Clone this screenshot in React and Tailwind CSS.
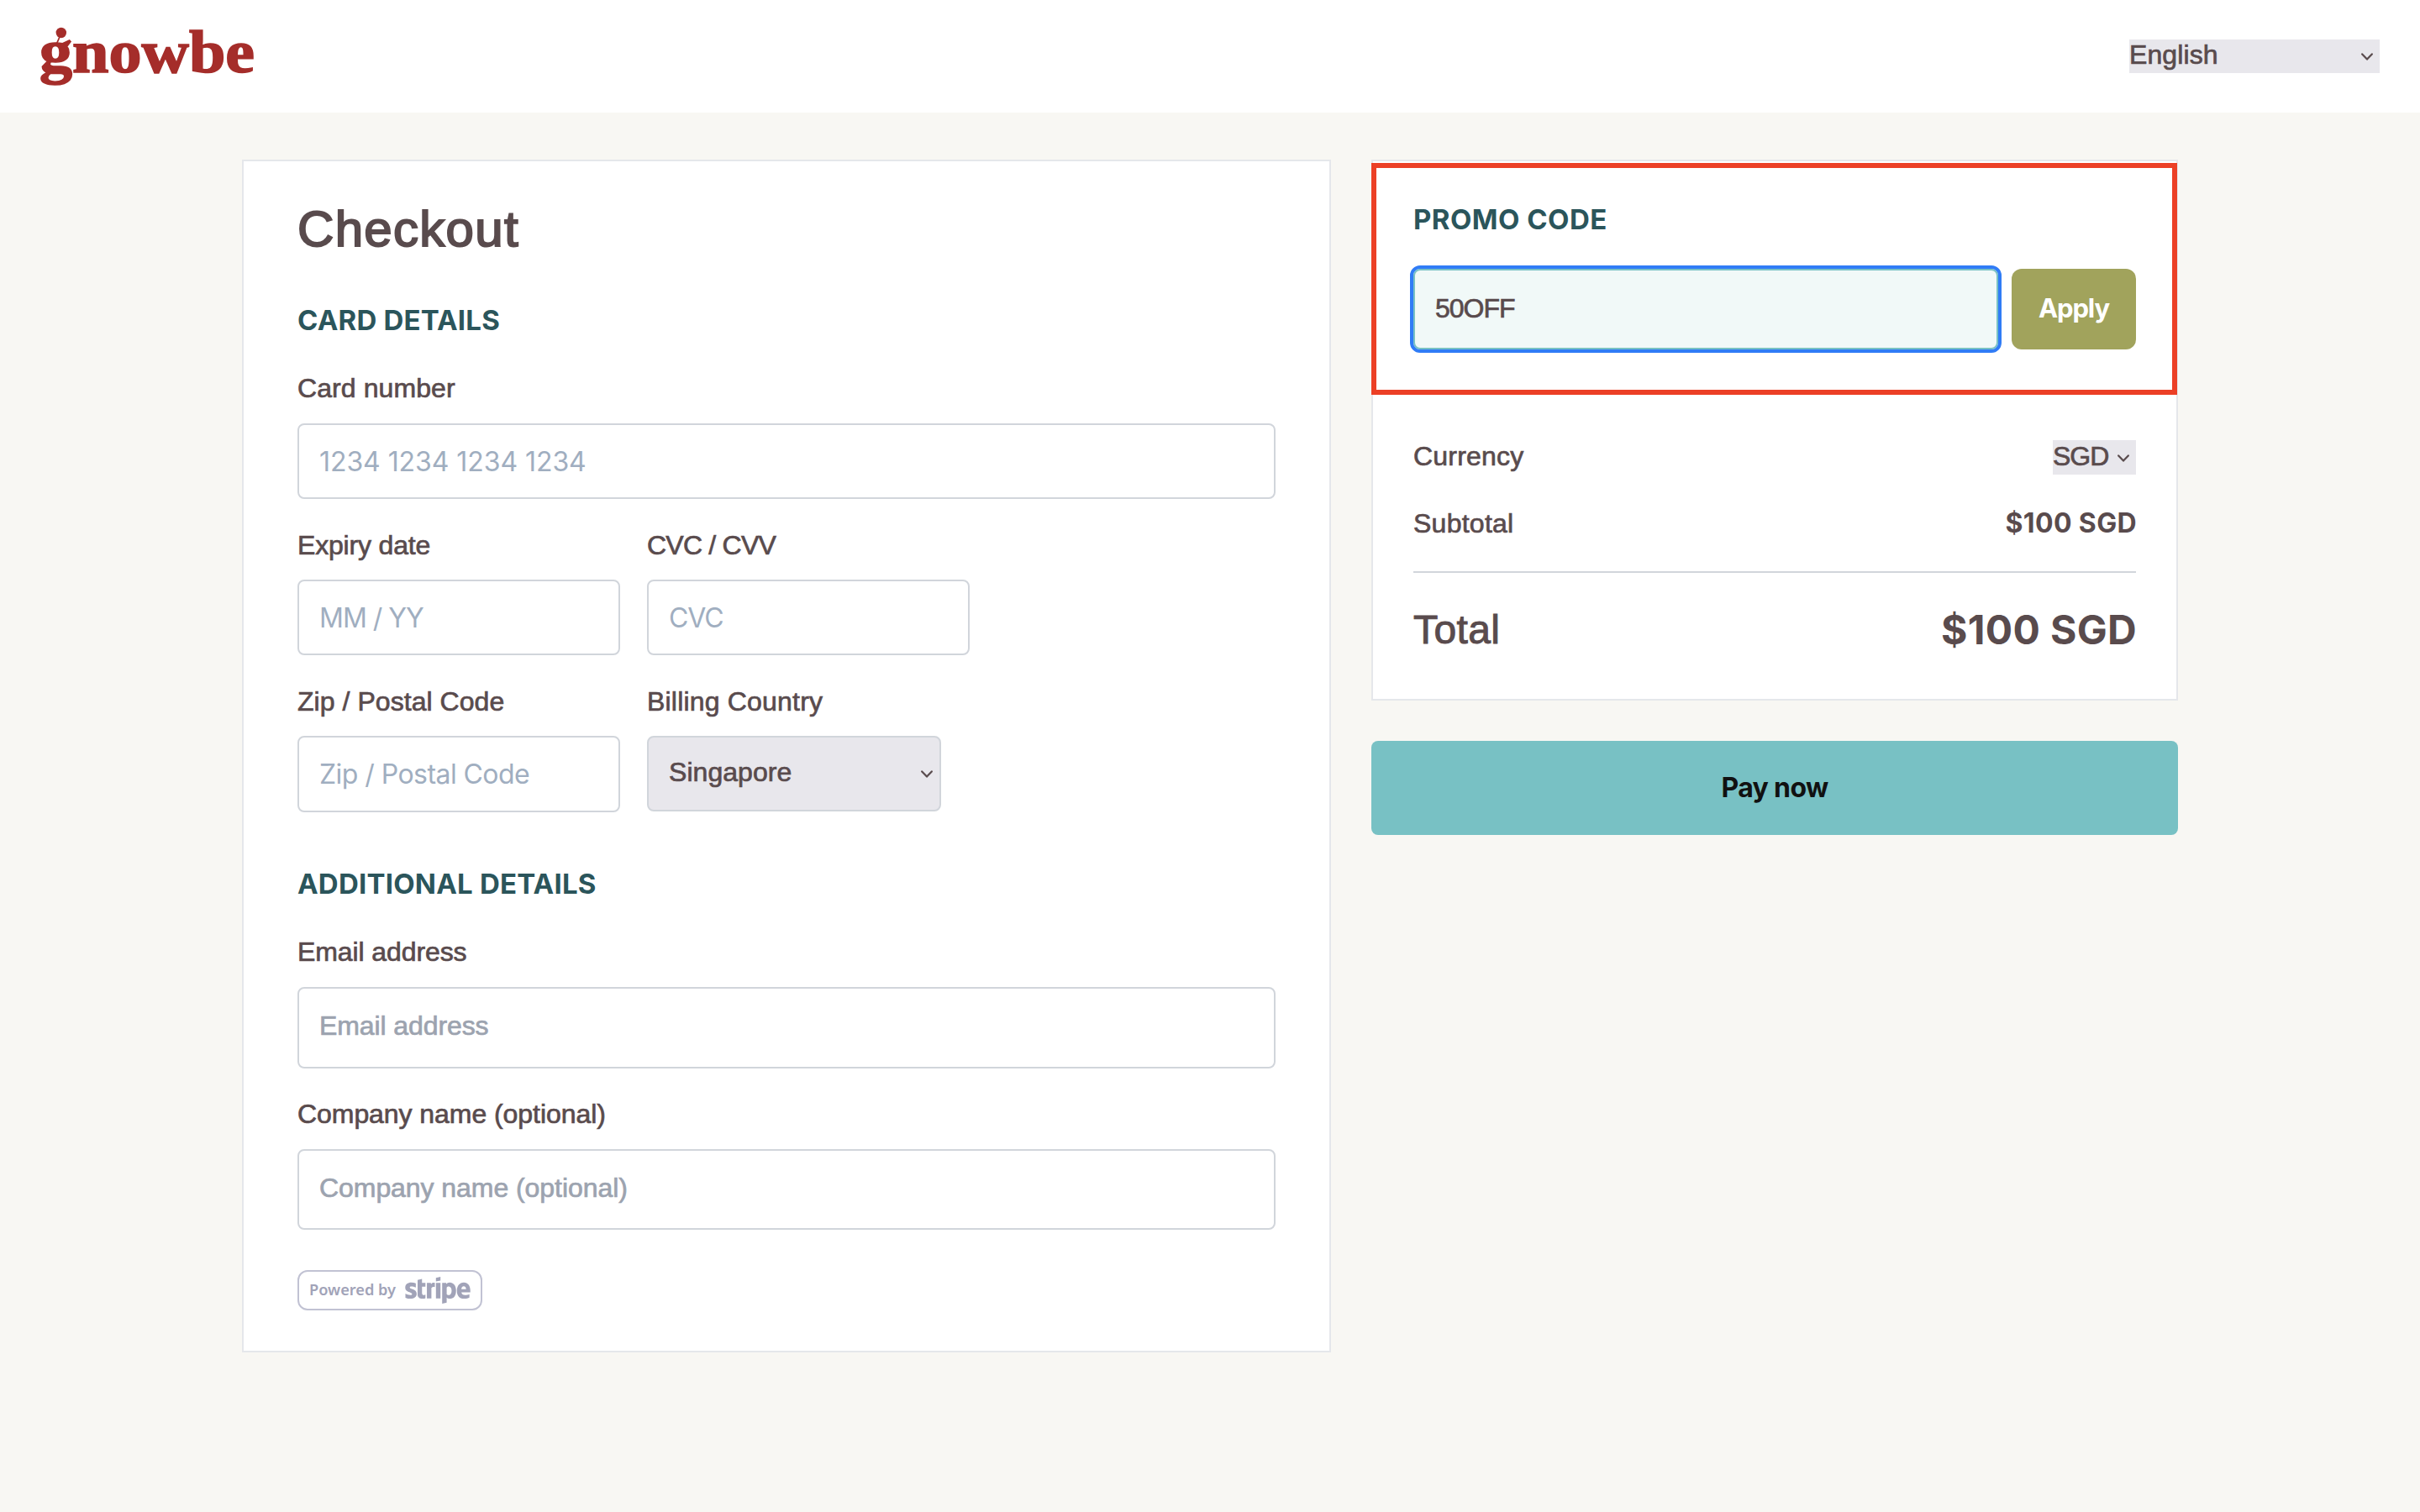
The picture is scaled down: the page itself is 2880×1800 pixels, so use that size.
import React from "react";
import { FaStripe } from "react-icons/fa";

const body = "text-[32px] leading-[48px] [-webkit-text-stroke:0.7px_#594b4d]";
const heading =
  "font-['Inter',sans-serif] text-[33px] leading-[46px] pb-0.5 font-bold text-[#2b555b] uppercase";
const field = "rounded-lg border-2 border-[#d1d5db] bg-white pl-6 pt-5";
const stripePlaceholder = "block font-['Inter',sans-serif] text-[32px] leading-[48px] text-[#a0aec0]";
const plainPlaceholder =
  "block text-[32px] leading-[48px] text-[#9ca3af] [-webkit-text-stroke:0.7px_#9ca3af]";

function Chevron({ className = "" }) {
  return (
    <svg
      viewBox="0 0 14 9"
      className={`h-[9px] w-[14px] shrink-0 ${className}`}
      fill="none"
      stroke="#594b4d"
      strokeWidth="2.2"
      strokeLinecap="round"
      strokeLinejoin="round"
    >
      <path d="M1.2 1.4 7 7.6 12.8 1.4" />
    </svg>
  );
}

function Logo() {
  return (
    <div className="relative h-[134px] w-[260px] text-[#a52d2a]">
      <span className="-ml-px block origin-left scale-x-[1.1] font-['Liberation_Serif',serif] text-[71px] leading-[125px] font-bold [-webkit-text-stroke:1.6px_#a52d2a]">
        gnowbe
      </span>
      <svg viewBox="0 0 30 24" className="absolute left-[14px] top-[31px] h-6 w-[30px]">
        <circle cx="10.8" cy="8" r="6.2" fill="currentColor" />
        <path d="M9.8 11 5 22" stroke="currentColor" strokeWidth="1.8" />
      </svg>
    </div>
  );
}

function Header() {
  return (
    <header className="flex h-[134px] items-start justify-between bg-white pl-12 pr-12">
      <Logo />
      <div className="mt-[47px] flex h-10 w-[298px] justify-between bg-[#e8e7ec] pr-2">
        <span className="text-[32px] leading-9 tracking-[0.1px] [-webkit-text-stroke:0.7px_#594b4d]">English</span>
        <Chevron className="mt-4" />
      </div>
    </header>
  );
}

function CheckoutForm() {
  return (
    <section className="h-[1420px] w-[1296px] border-2 border-[#e5e7eb] bg-white px-16 pt-[45px]">
      <h1 className="text-[60px] leading-[72px] tracking-[1.3px] [-webkit-text-stroke:2px_#594b4d]">Checkout</h1>

      <h2 className={`mt-[49px] tracking-[0.2px] ${heading}`}>Card details</h2>
      <div className={`mt-8 tracking-[0.08px] ${body}`}>Card number</div>
      <div className={`mt-[18px] h-[90px] ${field}`}>
        <span className={stripePlaceholder}>
          <span className="tracking-[-0.06px]">1234 1234 1234 1234</span>
        </span>
      </div>

      <div className="mt-[31px] flex gap-8">
        <div className="w-96">
          <div className={`tracking-[-0.18px] ${body}`}>Expiry date</div>
          <div className={`mt-[17px] h-[90px] ${field}`}>
            <span className={stripePlaceholder}>
              <span className="tracking-[-1px]">MM / YY</span>
            </span>
          </div>
        </div>
        <div className="w-96">
          <div className={`tracking-[-0.77px] ${body}`}>CVC / CVV</div>
          <div className={`mt-[17px] h-[90px] ${field}`}>
            <span className={stripePlaceholder}>
              <span className="tracking-[-1.1px]">CVC</span>
            </span>
          </div>
        </div>
      </div>

      <div className="mt-[31px] flex gap-8">
        <div className="w-96">
          <div className={`tracking-[0.05px] ${body}`}>Zip / Postal Code</div>
          <div className={`mt-[17px] h-[91px] ${field}`}>
            <span className={stripePlaceholder}>
              <span className="tracking-[-0.55px]">Zip / Postal Code</span>
            </span>
          </div>
        </div>
        <div className="w-[350px]">
          <div className={`tracking-[0.19px] ${body}`}>Billing Country</div>
          <div className="mt-[17px] flex h-[90px] justify-between rounded-lg border-2 border-[#d1d5db] bg-[#e8e7ec] pl-6 pr-2 pt-[17px]">
            <span className={`tracking-[0.05px] ${body}`}>Singapore</span>
            <Chevron className="mt-[22px]" />
          </div>
        </div>
      </div>

      <h2 className={`mt-[62px] tracking-[0.22px] ${heading}`}>Additional details</h2>
      <div className={`mt-8 tracking-[-0.1px] ${body}`}>Email address</div>
      <div className={`mt-[18px] h-[97px] ${field}`}>
        <span className={`tracking-[-0.1px] ${plainPlaceholder}`}>Email address</span>
      </div>
      <div className={`mt-[30px] tracking-[-0.06px] ${body}`}>Company name (optional)</div>
      <div className={`mt-[18px] h-24 ${field}`}>
        <span className={`tracking-[-0.06px] ${plainPlaceholder}`}>Company name (optional)</span>
      </div>

      <div className="mt-12 flex h-12 w-[220px] items-center overflow-hidden rounded-xl border-2 border-[#c1c2d3] pl-3 text-[#a1a3b8]">
        <span className="w-[114px] whitespace-nowrap pb-0.5 font-['Noto_Sans',sans-serif] text-[18.2px] leading-10 font-semibold">
          Powered by
        </span>
        <FaStripe className="-my-6 h-[62px] w-[78px] shrink-0" />
      </div>
    </section>
  );
}

function Summary() {
  return (
    <aside className="w-[960px]">
      <div className="relative h-[644px] border-2 border-[#e5e7eb] bg-white px-12 pt-[46px]">
        <div className="pointer-events-none absolute -left-0.5 top-0.5 h-[276px] w-[959px] border-6 border-[#ec4026]" />
        <h2 className={`tracking-[0.45px] ${heading}`}>Promo code</h2>
        <div className="mt-[34px] flex h-24 gap-4">
          <div className="w-[696px] rounded-lg border-2 border-[#78c1c4] bg-[#f1f9f8] pl-6 outline-4 outline-[#307cf6]">
            <span className="block text-[32px] leading-[90px] tracking-[-1px] [-webkit-text-stroke:0.7px_#594b4d]">
              50OFF
            </span>
          </div>
          <button className="block w-[148px] rounded-xl bg-[#a1a35c] pb-0.5 text-center font-['Inter',sans-serif] text-[31px] leading-[94px] font-bold tracking-[-1.1px] text-white">
            Apply
          </button>
        </div>

        <div className="mt-[103px] flex h-12 justify-between">
          <span className={`tracking-[0.2px] ${body}`}>Currency</span>
          <div className="mt-[5px] flex h-[41px] w-[99px] justify-between bg-[#e8e7ec] pr-2">
            <span className="text-[32px] leading-[38px] tracking-[-1px] [-webkit-text-stroke:0.7px_#594b4d]">SGD</span>
            <Chevron className="mt-[17px]" />
          </div>
        </div>
        <div className="mt-8 flex h-12 justify-between">
          <span className={`tracking-[0.25px] ${body}`}>Subtotal</span>
          <span className="-mr-px font-['Inter',sans-serif] text-[32px] leading-[48px] font-bold tracking-[0.36px]">
            $100 SGD
          </span>
        </div>
        <div className="mt-[33px] h-0.5 bg-[#d1d5db]" />
        <div className="mt-9 flex h-16 justify-between text-[48px]">
          <span className="leading-[64px] tracking-[0.4px] [-webkit-text-stroke:1px_#594b4d]">Total</span>
          <span className="-mr-px font-['Inter',sans-serif] leading-[63px] font-bold tracking-[0.33px]">$100 SGD</span>
        </div>
      </div>
      <button className="mt-12 block h-28 w-full rounded-lg bg-[#78c1c4] pb-0.5 text-center font-['Inter',sans-serif] text-[32px] leading-[109px] font-bold tracking-[-0.64px] text-[#111111]">
        Pay now
      </button>
    </aside>
  );
}

export default function App() {
  return (
    <div className="h-[1800px] w-[2880px] overflow-hidden bg-[#f8f7f3] font-['Liberation_Sans',Arial,sans-serif] text-[#594b4d]">
      <Header />
      <main className="flex gap-12 pl-72 pt-14">
        <CheckoutForm />
        <Summary />
      </main>
    </div>
  );
}
